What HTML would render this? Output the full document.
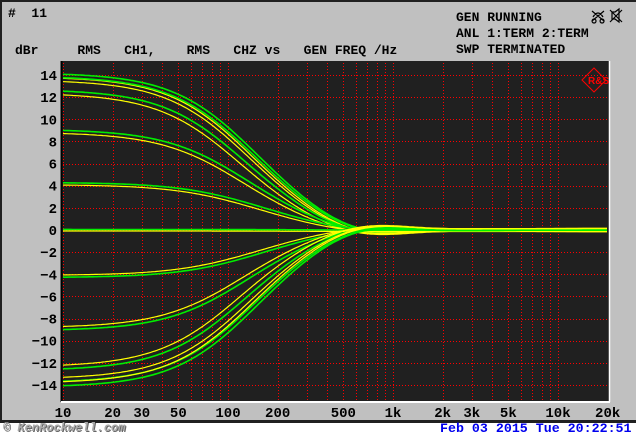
<!DOCTYPE html>
<html><head><style>
body{margin:0;width:640px;height:436px;background:#fff;position:relative;overflow:hidden;font-family:"Liberation Mono",monospace;font-weight:bold}
#panel{position:absolute;left:0;top:0;width:634px;height:418px;background:#c0c0c0;border-top:2px solid #202020;border-left:2px solid #202020;border-bottom:3px solid #202020}
.t{position:absolute;font-size:13px;color:#000;white-space:pre;line-height:14px}
</style></head><body>
<div id="panel"></div>
<svg id="s" width="640" height="436" style="position:absolute;left:0;top:0" xmlns="http://www.w3.org/2000/svg"></svg>
<div class="t" style="left:8px;top:7px">#  11</div>
<div class="t" style="left:15px;top:44px">dBr     RMS   CH1,    RMS   CHZ vs   GEN FREQ /Hz</div>
<div class="t" style="left:456px;top:11px">GEN RUNNING</div>
<div class="t" style="left:456px;top:27px">ANL 1:TERM 2:TERM</div>
<div class="t" style="left:456px;top:43px">SWP TERMINATED</div>
<div class="t" style="left:440px;top:422px;color:#0000ee;font-size:13.3px">Feb 03 2015 Tue 20:22:51</div>
<div class="t" style="left:3px;top:421px;color:#aaa;font-size:12px;font-style:italic;text-shadow:1px 1px 0 #666">© KenRockwell.com</div>
<script>
const s=document.getElementById('s');let h='';
const X=f=>63+165*Math.log10(f/10), Y=d=>230-11.07*d;
h+='<rect x="61" y="61" width="548" height="341" fill="#202020"/>';
h+='<line x1="61.5" y1="61" x2="61.5" y2="402" stroke="#000" stroke-width="2"/>';
h+='<line x1="61" y1="402" x2="610" y2="402" stroke="#fff" stroke-width="2"/><line x1="609.5" y1="61" x2="609.5" y2="402" stroke="#fff" stroke-width="1.5"/>';
let g='';
for(let dec=10;dec<=10000;dec*=10)for(let m=1;m<=9;m++){const f=dec*m;if(f>20000)break;const x=Math.round(X(f))+.5;if(x<63||x>607)continue;g+=`<line x1="${x}" y1="63" x2="${x}" y2="400"/>`;}
for(let d=-14;d<=14;d+=2){const y=Math.round(Y(d))+.5;g+=`<line x1="63" y1="${y}" x2="607" y2="${y}"/>`;}
h+=`<g stroke="#ff0000" stroke-width="1" stroke-dasharray="1 2" shape-rendering="crispEdges">${g}</g>`;
let L='';
for(let d=-14;d<=14;d+=2){L+=`<text x="57" y="${Y(d)+5}" text-anchor="end">${d<0?'\u2212'+(-d):d}</text>`;}
[[10,'10'],[20,'20'],[30,'30'],[50,'50'],[100,'100'],[200,'200'],[500,'500'],[1000,'1k'],[2000,'2k'],[3000,'3k'],[5000,'5k'],[10000,'10k'],[20000,'20k']].forEach(([f,t])=>{L+=`<text x="${Math.min(X(f),608)}" y="417" text-anchor="middle">${t}</text>`;});
h+=`<g font-family="Liberation Mono,monospace" font-weight="bold" font-size="14" fill="#000">${L}</g>`;
const curves=[[14.2,140],[13.9,135],[12.7,120],[9.1,125],[4.3,150],[0.05,200],[-4.3,150],[-9.1,125],[-12.7,120],[-13.8,135],[-14.2,140]];
function path(G,fc,dy,sh){let p='';for(let x=63;x<=607;x+=2){const f=10*Math.pow(10,(x-63)/165);const L=Math.log10(f),Lc=Math.log10(fc*sh);
let d=G/(1+Math.exp(4*(L-Lc)));d-=G*0.06*Math.exp(-Math.pow((L-2.8)/0.35,2));p+=(p?'L':'M')+x+' '+(Y(d)+dy).toFixed(1);}return p;}
curves.forEach(([G,fc],i)=>{h+=`<path d="${path(G,fc,0,1.03)}" stroke="#00ee00" stroke-width="1.6" fill="none"/>`;h+=`<path d="${path(G*0.985,fc,(G>0?1:-1)*1.5,0.97)}" stroke="#ffff00" stroke-width="1.2" fill="none"/>`;});
h+='<g stroke="#f00" fill="none" stroke-width="1"><path d="M594 68 L606 80 L594 92 L582 80 Z"/><text x="588" y="84" font-size="10" fill="#f00" stroke="none" font-family="Liberation Sans">R&amp;S</text></g>';
h+='<g stroke="#000" fill="none" stroke-width="1.2"><path d="M593 17 q5 -8 10 0 M594 19 a2 2 0 1 0 0.1 0 M602 19 a2 2 0 1 0 0.1 0 M592 11 L604 21 M604 11 L592 21"/><path d="M612 12 h3 l4 -3 v13 l-4 -3 h-3 z M610 10 L622 22 M622 10 L610 22"/></g>';
s.innerHTML=h;
</script>
</body></html>
